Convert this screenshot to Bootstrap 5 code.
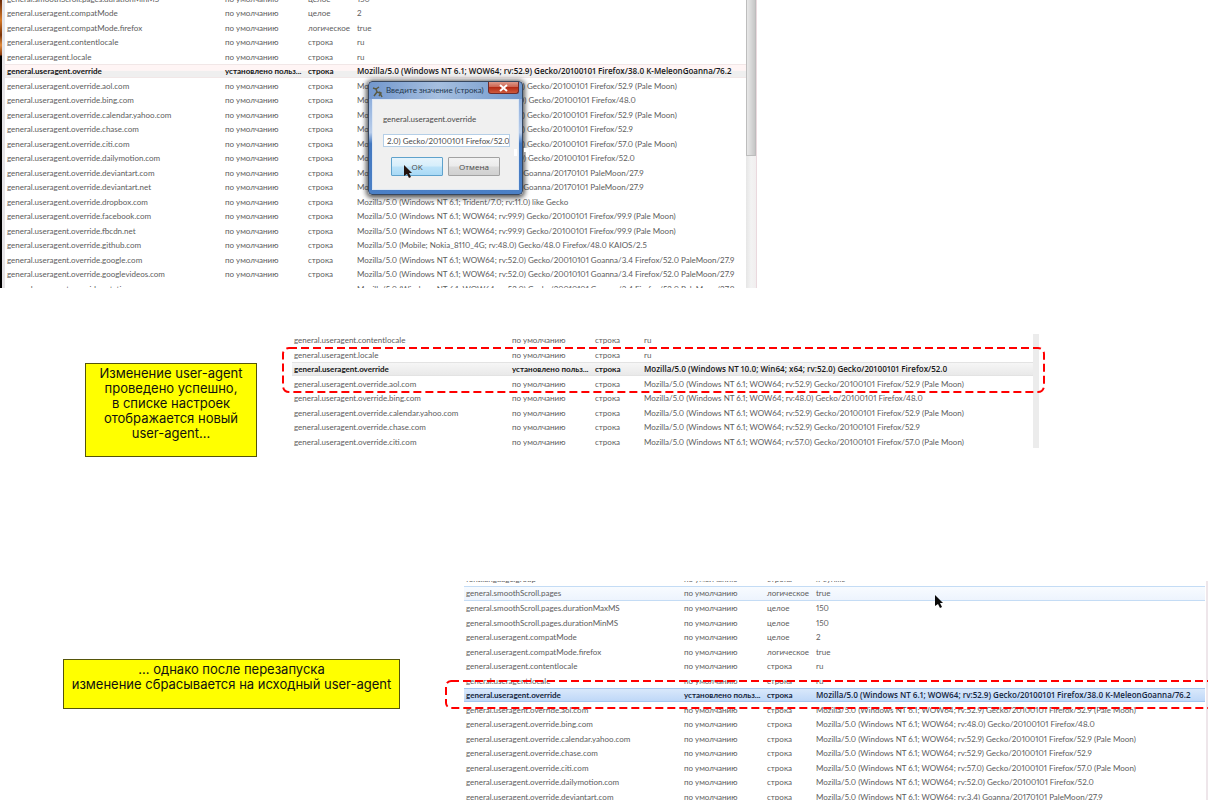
<!DOCTYPE html>
<html lang="ru">
<head>
<meta charset="utf-8">
<meta name="viewport" content="width=device-width, initial-scale=1">
<title>general.useragent.override</title>
<link href="https://cdn.jsdelivr.net/npm/bootstrap@5.3.0/dist/css/bootstrap.min.css" rel="stylesheet">
<style>
  body { background: #fff; color: #5c5c5c; font-family: Lato, "Open Sans", sans-serif; font-size: 8px; line-height: 14px; }
  .prefs { table-layout: fixed; width: 100%; border-collapse: separate; border-spacing: 0; font-variant-numeric: proportional-nums; }
  .prefs td { padding: 0 0 0 2px; height: 14px; line-height: 14px; white-space: nowrap; }
  .prefs .c-name { width: 218px; }
  .prefs .c-state { width: 83px; }
  .prefs .c-type { width: 49px; }
  .tall-even tr:nth-child(even) td, .tall-odd tr:nth-child(odd) td { height: 15px; }
  .prefs .picked td { color: #151515; font-weight: 700; line-height: 12px; border: solid #e3e3e3; border-width: 1px 0; background: linear-gradient(#f6f6f6, #e9e9e9); }
  .prefs .picked td:last-child { font-family: "Open Sans", sans-serif; font-weight: 600; }
  .view-top .picked td { background: linear-gradient(#fff5f5 45%, #efefef 50%); border-color: #f1e7e7; }
  .view-last .picked td { color: #14253c; background: linear-gradient(#d9e8fb, #bfd8f8); border-color: #a3c5ee; }
  .prefs .hovered td { line-height: 13px; background: linear-gradient(#f8fbff, #edf4fd); border: solid #c4dcf5; border-width: 1px 0; }
  .scrolled { margin-top: -9px; }
  .view-top { width: 62.7%; height: 288px; }
  .edge-line, .edge-dark, .bar, .bar-mid, .bar-last { flex: none; }
  .edge-line { width: 3px; background: #e6e4e6; }
  .edge-dark { width: 2px; background: linear-gradient(#6b2a08, #d77a28 20px, #7a3308 35px, #e08a3a 45px, #8a3c10 55px, #000 56px); }
  .bar { width: 11px; background: linear-gradient(90deg, #e6e6e6, #f3f3f3 50%, #f1eeef); border-right: 1px solid #ead9de; }
  .bar-thumb { height: 156px; background: linear-gradient(90deg, #e8e8e8, #d8d8d8 50%, #c6c6c6); border: solid #bdbdbd; border-width: 0 1px 1px; }
  .dlg { left: 368px; top: 81px; width: 155px; padding: 0 3px 4px; border: 1px solid #37475f; border-radius: 4px; background: linear-gradient(90deg, #7297cd, #a6bfdf 45%, #6f97cc) top/100% 17px no-repeat, linear-gradient(#7ba1d6, #b9cdea 45%, #4378c0 55%, #4b80c6); box-shadow: 0 1px 5px 2px rgba(0,0,0,.65); }
  .dlg-head { gap: 2px; height: 17px; color: #23384f; line-height: 17px; }
  .dlg-close { width: 31px; height: 12px; padding: 0; border: 1px solid #6e2b2b; border-top: 0; border-radius: 0 0 3px 3px; background: linear-gradient(#dd9a8b, #cd6450 45%, #b52c16 50%, #cf5a3c); color: #fff; line-height: 10px; }
  .dlg-body { height: 91px; padding: 11px 10px 0; background: #f0f0f0; border: 1px solid #dfe8f3; color: #4a4a4a; }
  .dlg-body label { display: block; line-height: 16px; }
  .dlg-input { display: block; width: 127px; height: 13px; margin-top: 7px; padding: 0 0 0 3px; border: 1px solid #b5cfe7; background: #fff; color: #4a4a4a; font: 8px/11px Lato, sans-serif; font-variant-numeric: proportional-nums; }
  .dlg-btns { gap: 5px; padding: 10px 8px 0; }
  .dlg-btn { width: 53px; height: 19px; padding: 0; border: 1px solid #a2a2a2; border-radius: 1px; background: linear-gradient(#f3f3f3, #ebebeb 48%, #dadada 52%, #d0d0d0); color: #4a4a4a; font: 8px/16px "Open Sans", sans-serif; }
  .dlg-btn.main { border-color: #5fa2cc; background: linear-gradient(#e6f4fc, #d6eefb 48%, #bce3f9 52%, #a9d9f5); }
  .pointer { width: 10px; height: 14px; }
  .pointer.on-ok { left: 30px; top: 65px; }
  .pointer.on-row { left: 470px; top: 14px; }
  .smudge { left: 514px; top: 148px; width: 15px; height: 11px; }
  .tip { border: 1px solid #55550a; background: #ff0; color: #111; font: 13px/15px Inter, sans-serif; text-align: center; padding-top: 2px; }
  .row-mid { margin-top: 46px; height: 123px; }
  .gutter-mid { width: 292px; padding: 29px 35px 0 85px; }
  .gutter-mid .tip { height: 94px; }
  .view-mid { width: calc(100% - 292px - 169px); height: 114px; }
  .clip { overflow: hidden; height: 100%; min-width: 0; }
  .view-mid .prefs { margin-top: -1px; }
  .bar-mid { width: 6px; background: #ececec; }
  .frame { pointer-events: none; overflow: visible; }
  .frame rect { fill: none; stroke: #f00; stroke-width: 2px; stroke-dasharray: 8 4; }
  .frame-mid { left: -9px; top: 14px; width: calc(100% + 14px); height: 44px; }
  .row-last { margin-top: 124px; min-height: 0; }
  .gutter-last { width: 464px; padding: 78px 64px 0 63px; }
  .gutter-last .tip { height: 50px; }
  .frame-last { left: -18px; top: 100px; width: calc(100% + 40px); height: 27px; }
  .bar-last { width: 2px; margin-left: 1px; background: #eee6ea; }
</style>
</head>
<body>
<main class="vh-100 d-flex flex-column overflow-hidden">

  <section class="view-top position-relative d-flex flex-shrink-0">
    <div class="edge-dark"></div>
    <div class="edge-line"></div>
    <div class="clip flex-grow-1">
      <table class="prefs scrolled tall-odd" aria-label="Настройки" data-list="top"></table>
    </div>
    <div class="bar"><div class="bar-thumb"></div></div>

    <form class="dlg position-absolute" aria-label="Введите значение">
      <div class="dlg-head d-flex align-items-start">
        <svg class="flex-shrink-0 mt-1" width="12" height="12" viewBox="0 0 12 12" fill="none" stroke="#5a5a42" stroke-width="1.5" aria-hidden="true"><path d="M1 2l3 1 1 3 3 1 2 4M4 3l3-2M5 6l-3 4M7 6l2 1-2 3"/></svg>
        <span class="flex-grow-1 text-nowrap">Введите значение (строка)</span>
        <button type="button" class="dlg-close" aria-label="Закрыть"><svg class="d-block mx-auto" width="9" height="8" viewBox="0 0 9 8" aria-hidden="true"><path d="M1 1l7 6M8 1L1 7" stroke="#fff" stroke-width="2"/></svg></button>
      </div>
      <div class="dlg-body position-relative">
        <label for="ua">general.useragent.override</label>
        <input id="ua" class="dlg-input" type="text" value="2.0) Gecko/20100101 Firefox/52.0">
        <div class="dlg-btns d-flex">
          <button type="button" class="dlg-btn main">OK</button>
          <button type="button" class="dlg-btn">Отмена</button>
        </div>
        <svg class="pointer on-ok position-absolute" viewBox="0 0 10 14" aria-hidden="true"><path d="M1 0v11l3-2 2 4 2-1-2-4h3z" fill="#24130e"/></svg>
      </div>
    </form>
    <svg class="smudge position-absolute" viewBox="0 0 15 11" aria-hidden="true"><path d="M0 1h3v7H0zM10 0h5v9h-3V4h-2z" fill="#fff"/></svg>
  </section>

  <section class="row-mid d-flex flex-shrink-0">
    <div class="gutter-mid flex-shrink-0">
      <div class="tip">Изменение user-agent<br>проведено успешно,<br>в списке настроек<br>отображается новый<br>user-agent...</div>
    </div>
    <div class="view-mid position-relative d-flex">
      <div class="clip flex-grow-1"><table class="prefs tall-even" aria-label="Настройки после изменения" data-list="mid"></table></div>
      <div class="bar-mid"></div>
      <svg class="frame frame-mid position-absolute" aria-hidden="true"><rect width="100%" height="100%" rx="6"/></svg>
    </div>
  </section>

  <section class="row-last d-flex flex-grow-1">
    <div class="gutter-last flex-shrink-0">
      <div class="tip">... однако после перезапуска<br>изменение сбрасывается на исходный user-agent</div>
    </div>
    <div class="view-last position-relative d-flex flex-grow-1">
      <div class="clip flex-grow-1"><table class="prefs scrolled tall-even" aria-label="Настройки после перезапуска" data-list="last"></table></div>
      <div class="bar-last"></div>
      <svg class="frame frame-last position-absolute" aria-hidden="true"><rect width="100%" height="100%" rx="5"/></svg>
      <svg class="pointer on-row position-absolute" viewBox="0 0 10 14" aria-hidden="true"><path d="M1 0v11l3-2 2 4 2-1-2-4h3z" fill="#0a0a0a"/></svg>
    </div>
  </section>
</main>

<script src="https://cdn.jsdelivr.net/npm/bootstrap@5.3.0/dist/js/bootstrap.bundle.min.js"></script>
<script>
  const G = 'general.useragent.', O = G + 'override', STR = 'строка', INT = 'целое', BOOL = 'логическое';
  const ff = (rv, moon) => `Mozilla/5.0 (Windows NT 6.1; WOW64; rv:${rv}) Gecko/20100101 Firefox/${rv}${moon ? ' (Pale Moon)' : ''}`;
  const goanna = 'Mozilla/5.0 (Windows NT 6.1; WOW64; rv:3.4) Goanna/20170101 PaleMoon/27.9';
  const google = 'Mozilla/5.0 (Windows NT 6.1; WOW64; rv:52.0) Gecko/20010101 Goanna/3.4 Firefox/52.0 PaleMoon/27.9';
  const oldUA = 'Mozilla/5.0 (Windows NT 6.1; WOW64; rv:52.9) Gecko/20100101 Firefox/38.0 K-MeleonGoanna/76.2';
  const newUA = 'Mozilla/5.0 (Windows NT 10.0; Win64; x64; rv:52.0) Gecko/20100101 Firefox/52.0';
  const minMS = ['general.smoothScroll.pages.durationMinMS', INT, '150'];
  const compat = [[G + 'compatMode', INT, '2'], [G + 'compatMode.firefox', BOOL, 'true']];
  const locales = [[G + 'contentlocale', STR, 'ru'], [G + 'locale', STR, 'ru']];
  const sites = [
    [O + '.aol.com', STR, ff('52.9', 1)], [O + '.bing.com', STR, ff('48.0')],
    [O + '.calendar.yahoo.com', STR, ff('52.9', 1)], [O + '.chase.com', STR, ff('52.9')],
    [O + '.citi.com', STR, ff('57.0', 1)], [O + '.dailymotion.com', STR, ff('52.0')],
    [O + '.deviantart.com', STR, goanna], [O + '.deviantart.net', STR, goanna],
    [O + '.dropbox.com', STR, 'Mozilla/5.0 (Windows NT 6.1; Trident/7.0; rv:11.0) like Gecko'],
    [O + '.facebook.com', STR, ff('99.9', 1)], [O + '.fbcdn.net', STR, ff('99.9', 1)],
    [O + '.github.com', STR, 'Mozilla/5.0 (Mobile; Nokia_8110_4G; rv:48.0) Gecko/48.0 Firefox/48.0 KAIOS/2.5'],
    [O + '.google.com', STR, google], [O + '.googlevideos.com', STR, google], [O + '.gstatic.com', STR, google]
  ];
  const lists = {
    top: [minMS, ...compat, ...locales, [O, STR, oldUA, 'picked'], ...sites],
    mid: [...locales, [O, STR, newUA, 'picked'], ...sites.slice(0, 5)],
    last: [['font.language.group', STR, 'x-cyrillic'], ['general.smoothScroll.pages', BOOL, 'true', 'hovered'],
      ['general.smoothScroll.pages.durationMaxMS', INT, '150'], minMS, ...compat, ...locales,
      [O, STR, oldUA, 'picked'], ...sites.slice(0, 7)]
  };
  document.querySelectorAll('[data-list]').forEach(t => {
    t.innerHTML = '<colgroup><col class="c-name"><col class="c-state"><col class="c-type"><col></colgroup><tbody>' +
      lists[t.dataset.list].map(([n, k, v, c = '']) =>
        `<tr class="${c}"><td>${n}</td><td>${c === 'picked' ? 'установлено польз...' : 'по умолчанию'}</td><td>${k}</td><td>${v}</td></tr>`).join('') + '</tbody>';
  });
</script>
</body>
</html>
